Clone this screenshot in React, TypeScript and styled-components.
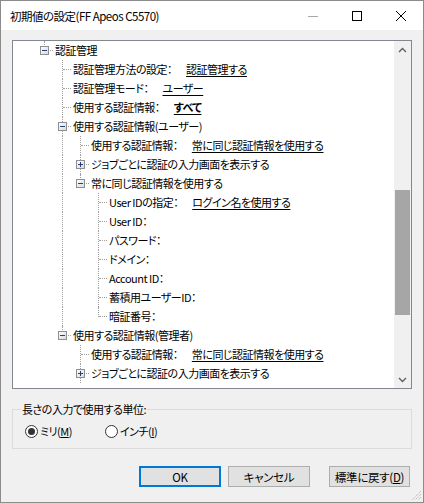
import React from "react";
import styled, {createGlobalStyle} from "styled-components";

const GlobalStyle = createGlobalStyle`
  html, body { margin: 0; padding: 0; background: #f0f0f0; }
  body {
    font-family: "Noto Sans CJK JP", "Noto Sans", sans-serif;
    font-size: 11px;
    letter-spacing: -0.5px;
    color: #000;
  }
  * { box-sizing: border-box; }
`;

const Window = styled.div`
  position: relative;
  width: 424px;
  height: 503px;
  border: 1px solid #8c8c8c;
  background: #f0f0f0;
  display: flex;
  flex-direction: column;
  font-feature-settings: "palt";
`;

const TitleBar = styled.div`
  height: 29px;
  background: #fff;
  display: flex;
  align-items: center;
`;

const Title = styled.div`
  flex: 1;
  padding-left: 9px;
  font-size: 11.5px;
  letter-spacing: -0.5px;
  line-height: 16px;
`;

const CaptionButton = styled.div`
  width: 44px;
  height: 29px;
  display: flex;
  align-items: center;
  justify-content: center;
`;

const TreePanel = styled.div`
  margin: 10px 11px 0;
  width: 400px;
  height: 349px;
  border: 1px solid #828790;
  background: #fff;
  display: flex;
`;

const Tree = styled.div`
  flex: 1;
  overflow: hidden;
  padding-left: 22px;
`;

const Row = styled.div`
  height: 19px;
  display: flex;
  align-items: stretch;
  white-space: nowrap;
`;

const Guide = styled.div<{ $line?: boolean }>`
  position: relative;
  width: 18px;
  flex: none;
  &::before {
    content: "";
    display: ${p => (p.$line ? "block" : "none")};
    position: absolute;
    left: 9px;
    top: 0;
    bottom: 0;
    border-left: 1px dotted #a0a0a0;
  }
`;

const Connector = styled.div<{ $down?: boolean }>`
  position: relative;
  width: 18px;
  flex: none;
  &::before {
    content: "";
    position: absolute;
    left: 9px;
    top: 0;
    height: ${p => (p.$down ? "19px" : "10px")};
    border-left: 1px dotted #a0a0a0;
  }
  &::after {
    content: "";
    position: absolute;
    left: 10px;
    right: 0;
    top: 9px;
    border-top: 1px dotted #a0a0a0;
  }
`;

const Expander = styled.svg`
  position: absolute;
  left: 5px;
  top: 5px;
  z-index: 1;
`;

const Label = styled.span`
  margin-left: 2px;
  line-height: 19px;
`;

const Value = styled.span<{ $bold?: boolean }>`
  margin-left: 14px;
  line-height: 19px;
  text-decoration: underline;
  text-underline-offset: 2px;
  font-weight: ${p => (p.$bold ? 700 : 400)};
`;

const ScrollBar = styled.div`
  width: 17px;
  flex: none;
  background: #f0f0f0;
  display: flex;
  flex-direction: column;
`;

const ScrollArrow = styled.div`
  height: 17px;
  display: flex;
  align-items: center;
  justify-content: center;
`;

const ScrollTrack = styled.div`
  flex: 1;
  padding: 132px 1px 0;
`;

const Thumb = styled.div`
  height: 125px;
  background: #a6a6a6;
`;

const GroupBox = styled.fieldset`
  margin: 12px 11px 0;
  width: 400px;
  padding: 0;
  min-width: 0;
  border: 1px solid #dcdcdc;
`;

const GroupLabel = styled.legend`
  margin-left: 8px;
  padding: 0 1px;
  line-height: 16px;
`;

const RadioRow = styled.div`
  display: flex;
  align-items: center;
  height: 16px;
  margin: 6px 0 9px 12px;
`;

const RadioOption = styled.label`
  width: 80px;
  display: flex;
  align-items: center;
  gap: 2px;
  line-height: 16px;
`;

const RadioCircle = styled.span<{ $checked?: boolean }>`
  width: 13px;
  height: 13px;
  border-radius: 50%;
  border: 1px solid #333;
  background: #fff;
  display: flex;
  align-items: center;
  justify-content: center;
  &::after {
    content: "";
    display: ${p => (p.$checked ? "block" : "none")};
    width: 7px;
    height: 7px;
    border-radius: 50%;
    background: #333;
  }
`;

const ButtonRow = styled.div`
  display: flex;
  margin: 17px 0 0 138px;
`;

const Button = styled.button<{ $default?: boolean; $width: number; $gap: number }>`
  width: ${p => p.$width}px;
  height: 21px;
  margin-left: ${p => p.$gap}px;
  padding: 0;
  font: inherit;
  font-size: 11.5px;
  letter-spacing: -0.3px;
  font-feature-settings: "palt";
  color: #000;
  background: #e1e1e1;
  border: ${p => (p.$default ? "2px solid #0078d7" : "1px solid #adadad")};
`;

const Grip = styled.svg`
  position: absolute;
  right: 1px;
  bottom: 1px;
`;

type Item = {
    guides: boolean[];
    down: boolean;
    exp?: "-" | "+";
    label: string;
    value?: string;
    bold?: boolean;
};

const ITEMS: Item[] = [
    {guides: [], down: false, exp: "-", label: "認証管理"},
    {guides: [false], down: true, label: "認証管理方法の設定：", value: "認証管理する"},
    {guides: [false], down: true, label: "認証管理モード：", value: "ユーザー"},
    {guides: [false], down: true, label: "使用する認証情報：", value: "すべて", bold: true},
    {guides: [false], down: true, exp: "-", label: "使用する認証情報(ユーザー)"},
    {guides: [false, true], down: true, label: "使用する認証情報：", value: "常に同じ認証情報を使用する"},
    {guides: [false, true], down: true, exp: "+", label: "ジョブごとに認証の入力画面を表示する"},
    {guides: [false, true], down: false, exp: "-", label: "常に同じ認証情報を使用する"},
    {guides: [false, true, false], down: true, label: "User IDの指定：", value: "ログイン名を使用する"},
    {guides: [false, true, false], down: true, label: "User ID："},
    {guides: [false, true, false], down: true, label: "パスワード："},
    {guides: [false, true, false], down: true, label: "ドメイン："},
    {guides: [false, true, false], down: true, label: "Account ID："},
    {guides: [false, true, false], down: true, label: "蓄積用ユーザーID："},
    {guides: [false, true, false], down: false, label: "暗証番号："},
    {guides: [false], down: false, exp: "-", label: "使用する認証情報(管理者)"},
    {guides: [false, false], down: true, label: "使用する認証情報：", value: "常に同じ認証情報を使用する"},
    {guides: [false, false], down: true, exp: "+", label: "ジョブごとに認証の入力画面を表示する"},
];

const ExpanderBox = ({sign}: { sign: "-" | "+" }) => (
    <Expander width="9" height="9" viewBox="0 0 9 9">
        <defs>
            <linearGradient id="exg" x1="0" y1="0" x2="1" y2="1">
                <stop offset="0" stopColor="#ffffff"/>
                <stop offset="1" stopColor="#d4d8e0"/>
            </linearGradient>
        </defs>
        <rect x="0.5" y="0.5" width="8" height="8" fill="url(#exg)" stroke="#8e8f8f"/>
        <path d="M2 4.5h5" stroke="#2a3f78" strokeWidth="1"/>
        {sign === "+" && <path d="M4.5 2v5" stroke="#2a3f78" strokeWidth="1"/>}
    </Expander>
);

const Chevron = ({up}: { up?: boolean }) => (
    <svg width="9" height="6" viewBox="0 0 9 6">
        <polyline
            points={up ? "1,5 4.5,1.5 8,5" : "1,1 4.5,4.5 8,1"}
            fill="none"
            stroke="#606060"
            strokeWidth="1.4"
        />
    </svg>
);

const App = () => {
    return (
        <>
            <GlobalStyle/>
            <Window>
                <TitleBar>
                    <Title>初期値の設定(FF Apeos C5570)</Title>
                    <CaptionButton>
                        <svg width="10" height="10" viewBox="0 0 10 10">
                            <path d="M0 5.5h10" stroke="#a8a8a8" strokeWidth="1"/>
                        </svg>
                    </CaptionButton>
                    <CaptionButton>
                        <svg width="10" height="10" viewBox="0 0 10 10">
                            <rect x="0.5" y="0.5" width="9" height="9" fill="none" stroke="#000" strokeWidth="1"/>
                        </svg>
                    </CaptionButton>
                    <CaptionButton>
                        <svg width="10" height="10" viewBox="0 0 10 10">
                            <path d="M0 0L10 10M10 0L0 10" stroke="#000" strokeWidth="1"/>
                        </svg>
                    </CaptionButton>
                </TitleBar>

                <TreePanel>
                    <Tree>
                        {ITEMS.map((item, i) => (
                            <Row key={i}>
                                {item.guides.map((g, j) => <Guide key={j} $line={g}/>)}
                                <Connector $down={item.down}>
                                    {item.exp && <ExpanderBox sign={item.exp}/>}
                                </Connector>
                                <Label>{item.label}</Label>
                                {item.value && <Value $bold={item.bold}>{item.value}</Value>}
                            </Row>
                        ))}
                    </Tree>
                    <ScrollBar>
                        <ScrollArrow><Chevron up/></ScrollArrow>
                        <ScrollTrack><Thumb/></ScrollTrack>
                        <ScrollArrow><Chevron/></ScrollArrow>
                    </ScrollBar>
                </TreePanel>

                <GroupBox>
                    <GroupLabel>長さの入力で使用する単位:</GroupLabel>
                    <RadioRow>
                        <RadioOption>
                            <RadioCircle $checked/>
                            <span>ミリ(<u>M</u>)</span>
                        </RadioOption>
                        <RadioOption>
                            <RadioCircle/>
                            <span>インチ(<u>I</u>)</span>
                        </RadioOption>
                    </RadioRow>
                </GroupBox>

                <ButtonRow>
                    <Button $default $width={82} $gap={0}>OK</Button>
                    <Button $width={82} $gap={7}>キャンセル</Button>
                    <Button $width={81} $gap={19}>標準に戻す(<u>D</u>)</Button>
                </ButtonRow>

                <Grip width="10" height="10" viewBox="0 0 10 10">
                    <path d="M9 3L3 9M9 6L6 9M9 0L0 9" stroke="#b0b0b0" strokeWidth="1" strokeDasharray="1 1"/>
                </Grip>
            </Window>
        </>
    );
};

export default App;
